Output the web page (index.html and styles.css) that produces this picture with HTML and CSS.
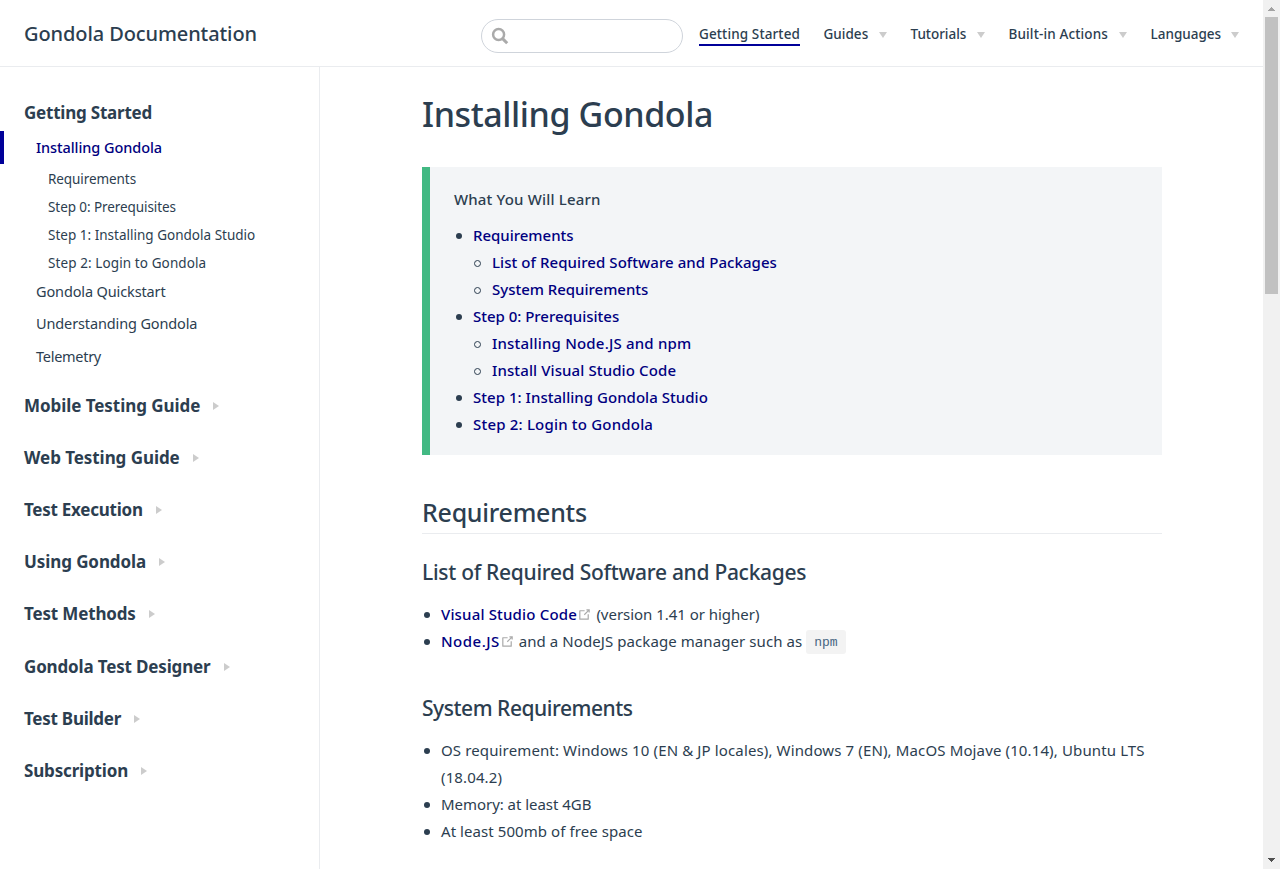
FILE: index.html
```html
<!DOCTYPE html>
<html lang="en">
<head>
<meta charset="utf-8">
<title>Installing Gondola | Gondola Documentation</title>
<link rel="stylesheet" href="styles.css">
</head>
<body>
<div class="page">
  <header class="navbar">
    <a class="site-name">Gondola Documentation</a>
    <div class="search">
      <svg width="18" height="18" viewBox="0 0 18 18"><circle cx="7.6" cy="7.6" r="5.5" fill="none" stroke="#aaa" stroke-width="2.5"/><path d="M11.6 11.6L16.2 16.2" fill="none" stroke="#aaa" stroke-width="3"/></svg>
    </div>
    <nav class="links">
      <a class="link active n1">Getting Started</a>
      <a class="link n2">Guides<i class="down"></i></a>
      <a class="link n3">Tutorials<i class="down"></i></a>
      <a class="link n4">Built-in Actions<i class="down"></i></a>
      <a class="link n5">Languages<i class="down"></i></a>
    </nav>
  </header>
  <div class="body">
    <aside class="sidebar">
      <h3 class="first">Getting Started</h3>
      <ul class="items">
        <li class="item current">Installing Gondola</li>
        <li>
          <ul class="subs">
            <li>Requirements</li>
            <li>Step 0: Prerequisites</li>
            <li class="s1">Step 1: Installing Gondola Studio</li>
            <li class="s2">Step 2: Login to Gondola</li>
          </ul>
        </li>
        <li class="item">Gondola Quickstart</li>
        <li class="item">Understanding Gondola</li>
        <li class="item telemetry">Telemetry</li>
      </ul>
      <h3 class="wide">Mobile Testing Guide<i class="right"></i></h3>
      <h3 class="wide">Web Testing Guide<i class="right"></i></h3>
      <h3 class="tight">Test Execution<i class="right"></i></h3>
      <h3 class="mid">Using Gondola<i class="right"></i></h3>
      <h3>Test Methods<i class="right"></i></h3>
      <h3>Gondola Test Designer<i class="right"></i></h3>
      <h3 class="tight">Test Builder<i class="right"></i></h3>
      <h3>Subscription<i class="right"></i></h3>
    </aside>
    <main class="content">
      <h1>Installing Gondola</h1>
      <section class="tip">
        <p class="tip-title">What You Will Learn</p>
        <ul class="list toc">
          <li><a class="t1">Requirements</a>
            <ul class="list circle">
              <li><a class="t2">List of Required Software and Packages</a></li>
              <li><a class="t1">System Requirements</a></li>
            </ul>
          </li>
          <li><a class="t1">Step 0: Prerequisites</a>
            <ul class="list circle">
              <li><a class="t4">Installing Node.JS and npm</a></li>
              <li><a class="t5">Install Visual Studio Code</a></li>
            </ul>
          </li>
          <li><a class="t3">Step 1: Installing Gondola Studio</a></li>
          <li><a class="t4">Step 2: Login to Gondola</a></li>
        </ul>
      </section>
      <h2>Requirements</h2>
      <h3>List of Required Software and Packages</h3>
      <ul class="list">
        <li><a class="vsc">Visual Studio Code</a><svg class="ext" viewBox="0 0 100 100" width="15" height="15"><path fill="#aaa" d="M18.8,85.1h56l0,0c2.2,0,4-1.8,4-4v-32h-8v28h-48v-48h28v-8h-32l0,0c-2.2,0-4,1.8-4,4v56C14.8,83.3,16.6,85.1,18.8,85.1z"/><path fill="#aaa" d="M45.7 48.7 51.3 54.3 77.2 28.5 77.2 37.2 85.2 37.2 85.2 14.9 62.8 14.9 62.8 22.9 71.5 22.9z"/></svg> <span class="ver">(version 1.41 or higher)</span></li>
        <li><a class="node">Node.JS</a><svg class="ext" viewBox="0 0 100 100" width="15" height="15"><path fill="#aaa" d="M18.8,85.1h56l0,0c2.2,0,4-1.8,4-4v-32h-8v28h-48v-48h28v-8h-32l0,0c-2.2,0-4,1.8-4,4v56C14.8,83.3,16.6,85.1,18.8,85.1z"/><path fill="#aaa" d="M45.7 48.7 51.3 54.3 77.2 28.5 77.2 37.2 85.2 37.2 85.2 14.9 62.8 14.9 62.8 22.9 71.5 22.9z"/></svg> <span class="pkg">and a NodeJS package manager such as</span> <code>npm</code></li>
      </ul>
      <h3 class="sysreq">System Requirements</h3>
      <ul class="list sys">
        <li class="os">OS requirement: Windows 10 (EN &amp; JP locales), Windows 7 (EN), MacOS Mojave (10.14), Ubuntu LTS<br>(18.04.2)</li>
        <li>Memory: at least 4GB</li>
        <li class="space">At least 500mb of free space</li>
      </ul>
    </main>
  </div>
</div>
<div class="scrollbar">
  <svg width="17" height="17"><path d="M5 11h7v-1h-1V9h-1V8H9V7H8v1H7v1H6v1H5z" fill="#a3a3a3"/></svg>
  <div class="thumb"></div>
  <svg class="bottom" width="17" height="17"><path d="M5 6h7v1h-1v1h-1v1H9v1H8V9H7V8H6V7H5z" fill="#505050"/></svg>
</div>
</body>
</html>
```

FILE: styles.css
```css
*, *::before { box-sizing: border-box; }
body {
  margin: 0; height: 869px; overflow: hidden; display: flex; background: #fff;
  font-family: "Noto Sans", "Open Sans", sans-serif; font-size: 15px; color: #2c3e50;
}
h1, h2, h3, p, ul { margin: 0; padding: 0; }
.page { width: 1263px; height: 869px; display: flex; flex-direction: column; }

.navbar { height: 67px; flex: none; border-bottom: 1px solid #eaecef; display: flex; align-items: center; padding-left: 24px; }
.site-name { font-size: 20px; font-weight: 500; letter-spacing: -.1px; line-height: 30px; margin-top: 2px; width: 457px; }
.search { width: 202px; height: 34px; margin-top: 5px; border: 1px solid #cfd4db; border-radius: 17px; padding: 7px 0 0 9px; }
.search svg { display: block; }
.links { display: flex; gap: 24px; margin-left: 16px; font-size: 13.5px; font-weight: 500; }
.link { display: flex; align-items: center; justify-content: space-between; height: 24px; margin-top: 3px; padding-bottom: 2px; white-space: nowrap; }
.active { height: 23px; padding: 2px 0 0; border-bottom: 2px solid #000099; }
.n1 { width: 101px; letter-spacing: .12px; }
.n2 { width: 63px; letter-spacing: .02px; margin-left: -.5px; }
.n3 { width: 74px; letter-spacing: -.03px; }
.n4 { width: 118px; letter-spacing: .14px; }
.n5 { width: 88.5px; letter-spacing: 0; }
.down { margin-top: 2px; border: 4px solid transparent; border-top: 6px solid #ccc; border-bottom: 0; }

.body { display: flex; flex: 1; min-height: 0; }
.sidebar { width: 320px; flex: none; border-right: 1px solid #eaecef; padding-top: 20px; }
.sidebar h3 { display: flex; align-items: center; gap: 13px; height: 52.2px; padding-left: 24px; font-size: 17px; font-weight: 700; letter-spacing: -.16px; }
.sidebar .first { height: 44px; padding-top: 6px; letter-spacing: -.22px; }
.sidebar .wide { letter-spacing: -.06px; }
.sidebar .mid { letter-spacing: -.09px; }
.sidebar .tight { letter-spacing: -.25px; }
.right { margin-top: 1px; border: 4px solid transparent; border-left: 6px solid #ccc; border-right: 0; }
.items { list-style: none; height: 248px; }
.item { height: 32.4px; line-height: 32px; padding-left: 36px; font-size: 14.5px; letter-spacing: -.13px; }
.current { height: 33px; border-left: 4px solid #000099; padding-left: 32px; color: #000080; font-weight: 500; letter-spacing: -.07px; }
.telemetry { letter-spacing: -.28px; }
.subs { list-style: none; padding-top: 1px; height: 111px; }
.subs li { height: 28px; line-height: 28px; padding-left: 48px; font-size: 13.5px; letter-spacing: -.08px; }
.subs .s1 { letter-spacing: .01px; }
.subs .s2 { letter-spacing: .1px; }

.content { width: 740px; margin-left: 102px; padding-top: 23px; }
h1 { font-size: 34px; font-weight: 500; letter-spacing: -.41px; line-height: 48px; height: 77px; }
.tip { height: 288px; background: #f3f5f7; border-left: 8px solid #42b983; padding: 19px 24px 0; }
.tip-title { height: 36px; line-height: 27px; font-weight: 500; letter-spacing: .17px; }
.list { list-style: none; padding-left: 19px; line-height: 27px; }
.list li::before { content: ""; display: inline-block; width: 6px; height: 6px; margin: 0 11px 0 -17px; border-radius: 50%; background: #2c3e50; vertical-align: 2px; }
.list .circle li::before { width: 7px; height: 7px; margin: 0 11px 0 -18px; border: 1px solid #2c3e50; background: none; vertical-align: 1px; }
.list a { color: #000080; font-weight: 500; }
.t1 { letter-spacing: -.02px; }
.t2 { letter-spacing: .07px; }
.t3 { letter-spacing: .03px; }
.t4 { letter-spacing: .19px; }
.t5 { letter-spacing: .11px; }
.content h2 { margin-top: 37px; height: 42px; line-height: 40px; border-bottom: 1px solid #eaecef; font-size: 25px; font-weight: 500; letter-spacing: -.26px; }
.content h3 { margin-top: 22px; height: 45px; line-height: 32px; font-size: 21px; font-weight: 500; letter-spacing: -.29px; }
.content .sysreq { margin-top: 37px; letter-spacing: -.46px; }
.ext { vertical-align: -2px; }
.vsc { letter-spacing: .17px; }
.node { letter-spacing: .48px; }
.ver { margin-left: .5px; letter-spacing: -.03px; }
.pkg { letter-spacing: .08px; }
code { display: inline-block; height: 24px; padding: 0 8px; border-radius: 3px; background: #f3f3f3; color: #476582; font: 13px/25px "Liberation Mono", monospace; vertical-align: 1px; margin-top: -2px; }
.sys { letter-spacing: -.04px; }
.os { letter-spacing: .13px; white-space: nowrap; }
.space { letter-spacing: .07px; }

.scrollbar { width: 17px; height: 869px; background: #f1f1f1; display: flex; flex-direction: column; align-items: center; }
.scrollbar svg { display: block; flex: none; }
.thumb { width: 13px; height: 277px; background: #c1c1c1; }
.bottom { margin-top: auto; }
```
